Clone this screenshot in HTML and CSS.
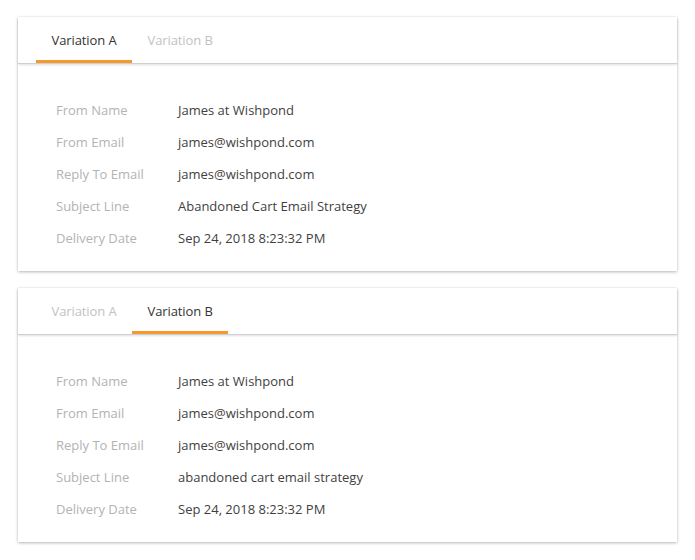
FILE: index.html
```html
<!DOCTYPE html>
<html>
<head>
<meta charset="utf-8">
<link rel="stylesheet" href="styles.css">
</head>
<body>
<div class="page">
  <section class="card">
    <nav class="tabs">
      <div class="tab active">Variation A</div>
      <div class="tab">Variation B</div>
    </nav>
    <dl class="details">
      <div class="row"><dt>From Name</dt><dd>James at Wishpond</dd></div>
      <div class="row"><dt>From Email</dt><dd>james@wishpond.com</dd></div>
      <div class="row"><dt>Reply To Email</dt><dd>james@wishpond.com</dd></div>
      <div class="row"><dt>Subject Line</dt><dd>Abandoned Cart Email Strategy</dd></div>
      <div class="row"><dt>Delivery Date</dt><dd>Sep 24, 2018 8:23:32 PM</dd></div>
    </dl>
  </section>
  <section class="card">
    <nav class="tabs">
      <div class="tab">Variation A</div>
      <div class="tab active">Variation B</div>
    </nav>
    <dl class="details">
      <div class="row"><dt>From Name</dt><dd>James at Wishpond</dd></div>
      <div class="row"><dt>From Email</dt><dd>james@wishpond.com</dd></div>
      <div class="row"><dt>Reply To Email</dt><dd>james@wishpond.com</dd></div>
      <div class="row"><dt>Subject Line</dt><dd>abandoned cart email strategy</dd></div>
      <div class="row"><dt>Delivery Date</dt><dd>Sep 24, 2018 8:23:32 PM</dd></div>
    </dl>
  </section>
</div>
</body>
</html>
```
FILE: styles.css
```css
html, body {
  margin: 0;
  padding: 0;
  background: #fff;
}
body {
  font-family: "Open Sans", "Liberation Sans", sans-serif;
  font-size: 13px;
  color: #444;
}
.page {
  padding: 17px 18px;
  display: flex;
  flex-direction: column;
  gap: 17px;
}
.card {
  background: #fff;
  box-shadow: 0 1px 3px rgba(0, 0, 0, 0.28), 0 0 1px rgba(0, 0, 0, 0.08);
  height: 254px;
  display: flex;
  flex-direction: column;
}
.tabs {
  display: flex;
  height: 47px;
  padding: 0 18px;
  border-bottom: 1px solid #cfcfcf;
  box-shadow: 0 1px 2px rgba(0, 0, 0, 0.12);
  box-sizing: border-box;
}
.tab {
  padding: 3px 15.5px 0;
  display: flex;
  align-items: center;
  color: #c2c2c2;
  border-bottom: 3px solid transparent;
  letter-spacing: -0.1px;
}
.tab.active {
  color: #333;
  border-bottom-color: #f39a2b;
}
.details {
  margin: 0;
  padding: 30px 38px 0;
  display: flex;
  flex-direction: column;
}
.row {
  display: flex;
  height: 32px;
  align-items: center;
}
dt {
  width: 122px;
  color: #b3b3b3;
}
dd {
  margin: 0;
  color: #3f3f3f;
}
```
